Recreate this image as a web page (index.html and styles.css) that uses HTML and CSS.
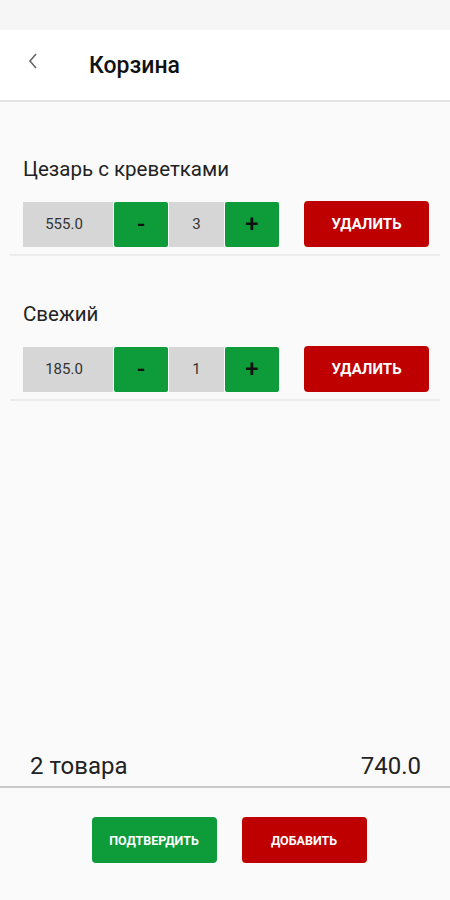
FILE: index.html
```html
<!DOCTYPE html>
<html lang="ru">
  <head>
    <meta charset="UTF-8" />
    <meta name="viewport" content="width=device-width, initial-scale=1.0" />
    <title>Корзина</title>
    <link rel="stylesheet" href="styles.css">
  </head>
  <body>
    <div class="status-bar"></div>

    <header class="toolbar">
      <button class="back" aria-label="Назад">
        <svg width="12" height="18" viewBox="0 0 12 18">
          <path d="M9 2 L3 9 L9 16" fill="none" stroke="#666" stroke-width="1.6" />
        </svg>
      </button>
      <h1>Корзина</h1>
    </header>

    <main class="cart">
      <div class="item">
        <div class="item-name">Цезарь с креветками</div>
        <div class="item-row">
          <div class="cell price">555.0</div>
          <button class="cell step">-</button>
          <div class="cell qty">3</div>
          <button class="cell step">+</button>
          <button class="btn-delete">Удалить</button>
        </div>
      </div>

      <div class="item">
        <div class="item-name">Свежий</div>
        <div class="item-row">
          <div class="cell price">185.0</div>
          <button class="cell step">-</button>
          <div class="cell qty">1</div>
          <button class="cell step">+</button>
          <button class="btn-delete">Удалить</button>
        </div>
      </div>
    </main>

    <div class="summary">
      <span>2 товара</span>
      <span>740.0</span>
    </div>

    <div class="actions">
      <button class="btn btn-green">Подтвердить</button>
      <button class="btn btn-red">Добавить</button>
    </div>
  </body>
</html>
```

FILE: styles.css
```css
* {
  box-sizing: border-box;
}

body {
  font-family: Roboto, "Noto Sans", sans-serif;
  background-color: #fafafa;
  color: #222;
  margin: 0;
  padding: 0;
  height: 900px;
  display: flex;
  flex-direction: column;
}

button {
  font-family: inherit;
  border: none;
  cursor: pointer;
}

.status-bar {
  height: 30px;
  background-color: #f6f6f6;
}

.toolbar {
  height: 72px;
  background-color: #ffffff;
  border-bottom: 2px solid #e4e4e4;
  display: flex;
  align-items: center;
  padding-left: 27px;
}

.back {
  background: none;
  padding: 0;
  width: 12px;
  height: 18px;
  margin-top: -8px;
  display: flex;
}

.toolbar h1 {
  margin: 0 0 0 50px;
  font-size: 23px;
  font-weight: 500;
  color: #111;
}

.cart {
  flex: 1;
  padding-top: 55px;
}

.item {
  margin: 0 10px 46px;
  padding-bottom: 7px;
  border-bottom: 2px solid #ececec;
}

.item-name {
  padding-left: 13px;
  font-size: 20.5px;
  line-height: 25px;
  color: #222;
}

.item-row {
  display: flex;
  align-items: center;
  margin-top: 19px;
  padding-left: 13px;
}

.cell {
  height: 45px;
  display: flex;
  align-items: center;
  justify-content: center;
  font-size: 15px;
  color: #333;
}

.price {
  width: 90px;
  background-color: #d6d6d6;
  padding-right: 8px;
}

.qty {
  width: 55px;
  background-color: #d6d6d6;
  margin-left: 1px;
}

.step {
  width: 54px;
  margin-left: 1px;
  background-color: #0e9b3a;
  border-radius: 2px;
  color: #111;
  font-size: 24px;
  font-weight: 500;
}

.btn-delete {
  margin-left: 25px;
  width: 125px;
  height: 46px;
  border-radius: 4px;
  background-color: #bf0000;
  color: #fff;
  font-size: 15px;
  font-weight: 700;
  text-transform: uppercase;
}

.summary {
  display: flex;
  justify-content: space-between;
  padding: 0 29px 0 30px;
  font-size: 24px;
  line-height: 26px;
  color: #222;
  padding-bottom: 7px;
  border-bottom: 2px solid #c8c8c8;
}

.actions {
  display: flex;
  justify-content: center;
  gap: 25px;
  padding: 29px 0 0 8px;
  height: 112px;
}

.btn {
  width: 125px;
  height: 46px;
  border-radius: 4px;
  color: #fff;
  font-size: 12.5px;
  font-weight: 700;
  text-transform: uppercase;
}

.btn-green {
  background-color: #0e9b3a;
}

.btn-red {
  background-color: #bf0000;
}
```
